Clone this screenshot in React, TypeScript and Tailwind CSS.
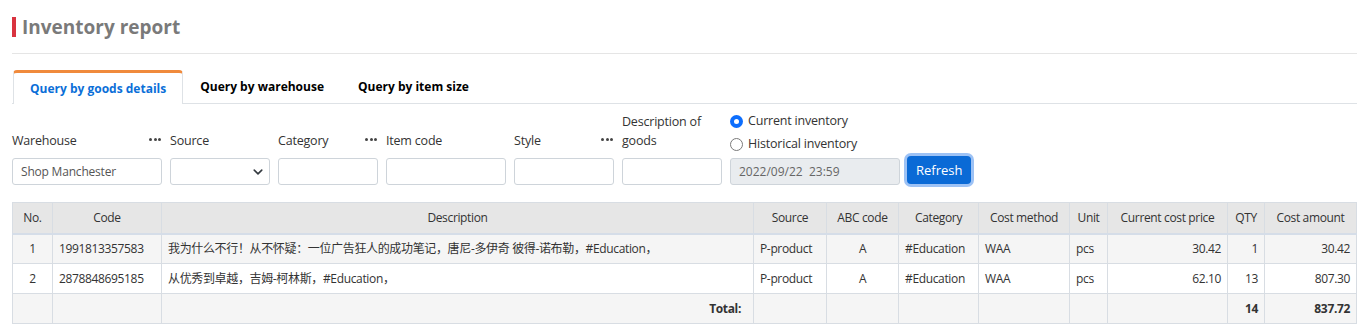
import React from 'react';

const font = { fontFamily: '"Open Sans", "Noto Sans CJK SC", sans-serif' };

const Dots = () => (
  <span className="flex gap-[1.5px] mb-[9px] mr-[1px]">
    <span className="w-[3px] h-[3px] rounded-full bg-[#444]" />
    <span className="w-[3px] h-[3px] rounded-full bg-[#444]" />
    <span className="w-[3px] h-[3px] rounded-full bg-[#444]" />
  </span>
);

interface FieldProps {
  label: React.ReactNode;
  width: string;
  dots?: boolean;
  children: React.ReactNode;
}

const Field: React.FC<FieldProps> = ({ label, width, dots, children }) => (
  <div className={`flex flex-col ${width}`}>
    <div className="flex justify-between items-end mb-[8px] text-[12.5px] tracking-[-0.2px] leading-[19px] text-[#333]">
      <span>{label}</span>
      {dots && <Dots />}
    </div>
    {children}
  </div>
);

const inputCls = 'h-[27px] w-full border border-[#ced4da] rounded-[3px] bg-white px-[8px] text-[12px] tracking-[-0.2px] text-[#555] outline-none';

const columns = [
  { name: 'No.', w: 'w-[40px]', align: 'text-center' },
  { name: 'Code', w: 'w-[109px]', align: 'text-left' },
  { name: 'Description', w: 'w-auto', align: 'text-left' },
  { name: 'Source', w: 'w-[73px]', align: 'text-left' },
  { name: 'ABC code', w: 'w-[72px]', align: 'text-center' },
  { name: 'Category', w: 'w-[80px]', align: 'text-left' },
  { name: 'Cost method', w: 'w-[91px]', align: 'text-left' },
  { name: 'Unit', w: 'w-[38px]', align: 'text-left' },
  { name: 'Current cost price', w: 'w-[120px]', align: 'text-right' },
  { name: 'QTY', w: 'w-[37px]', align: 'text-right' },
  { name: 'Cost amount', w: 'w-[92px]', align: 'text-right' },
];

const rows = [
  ['1', '1991813357583', '我为什么不行！从不怀疑：一位广告狂人的成功笔记，唐尼-多伊奇 彼得-诺布勒，#Education，', 'P-product', 'A', '#Education', 'WAA', 'pcs', '30.42', '1', '30.42'],
  ['2', '2878848695185', '从优秀到卓越，吉姆-柯林斯，#Education，', 'P-product', 'A', '#Education', 'WAA', 'pcs', '62.10', '13', '807.30'],
];

const cell = 'border border-[#d8dde3]';

export default function App() {
  return (
    <div className="bg-white pl-[12px] pr-[8px] pt-[15px] text-[#333]" style={font}>
      <div className="flex items-center h-[24px]">
        <span className="w-[4px] h-[20px] bg-[#d9333f] mr-[6px]" />
        <h1 className="text-[19px] font-bold text-[#7a7a7a] leading-[24px]">Inventory report</h1>
      </div>
      <div className="border-b border-[#e5e5e5] mt-[14px]" />

      <div className="flex mt-[16px] border-b border-[#dee2e6] pl-[1px]">
        <div className="-mb-[1px] h-[34px] px-[16px] border-x border-[#dee2e6] border-t-[3px] border-t-[#f08a3c] rounded-t-[4px] bg-white text-[12px] font-bold text-[#0b6fd8] leading-[29px] pt-[1px]">
          Query by goods details
        </div>
        <div className="h-[33px] px-[17px] text-[12px] font-bold text-black leading-[33px]">Query by warehouse</div>
        <div className="h-[33px] px-[17px] text-[12px] font-bold text-black leading-[33px]">Query by item size</div>
      </div>

      <div className="flex items-end gap-[8px] mt-[6px]">
        <Field label="Warehouse" width="w-[150px]" dots>
          <input className={inputCls} defaultValue="Shop Manchester" style={font} />
        </Field>
        <Field label="Source" width="w-[100px]">
          <div className={`${inputCls} flex items-center justify-end pr-[6px]`}>
            <svg width="10" height="10" viewBox="0 0 16 16" fill="none" stroke="#343a40" strokeWidth="2.5" strokeLinecap="round" strokeLinejoin="round">
              <path d="M2 5l6 6 6-6" />
            </svg>
          </div>
        </Field>
        <Field label="Category" width="w-[100px]" dots>
          <input className={inputCls} />
        </Field>
        <Field label="Item code" width="w-[120px]">
          <input className={inputCls} />
        </Field>
        <Field label="Style" width="w-[100px]" dots>
          <input className={inputCls} />
        </Field>
        <Field label={<>Description of<br />goods</>} width="w-[100px]">
          <input className={inputCls} />
        </Field>
        <div className="flex flex-col w-[170px]">
          <label className="flex items-center h-[23px] text-[12.5px] tracking-[-0.2px] text-[#333]">
            <span className="w-[13px] h-[13px] rounded-full bg-[#0d6efd] flex items-center justify-center mr-[5px]">
              <span className="w-[5px] h-[5px] rounded-full bg-white" />
            </span>
            Current inventory
          </label>
          <label className="flex items-center h-[23px] text-[12.5px] tracking-[-0.2px] text-[#333]">
            <span className="w-[13px] h-[13px] rounded-full border border-[#7a7a7a] bg-white mr-[5px]" />
            Historical inventory
          </label>
          <div className="mt-[2px] h-[27px] border border-[#ced4da] rounded-[3px] bg-[#e9ecef] px-[8px] text-[12px] text-[#666] leading-[25px] whitespace-pre">
            2022/09/22  23:59
          </div>
        </div>
        <button className="ml-[-1px] mb-[1px] h-[28px] px-[9px] pt-[1px] rounded-[4px] bg-[#0a6ad6] text-white text-[13px] ring-[3px] ring-[#9dc2f5]">
          Refresh
        </button>
      </div>

      <table className="mt-[17px] w-full table-fixed border-collapse text-[12px] tracking-[-0.35px] text-[#333]">
        <colgroup>
          {columns.map((c, i) => (
            <col key={i} className={c.w} />
          ))}
        </colgroup>
        <thead>
          <tr className="bg-[#e6e6e6] h-[31px]">
            {columns.map((c, i) => (
              <th key={i} className={`${cell} border-b-2 border-b-[#d5dde8] font-normal px-[4px] text-center`}>
                {c.name}
              </th>
            ))}
          </tr>
        </thead>
        <tbody>
          {rows.map((r, ri) => (
            <tr key={ri} className={`h-[30px] ${ri % 2 === 0 ? 'bg-[#f5f5f5]' : 'bg-white'}`}>
              {r.map((v, ci) => (
                <td key={ci} className={`${cell} px-[6px] whitespace-nowrap overflow-hidden ${columns[ci].align}`}>
                  {v}
                </td>
              ))}
            </tr>
          ))}
          <tr className="h-[30px] bg-[#f5f5f5] font-bold">
            <td className={cell} />
            <td className={cell} />
            <td className={`${cell} px-[12px] text-right`}>Total:</td>
            <td className={cell} />
            <td className={cell} />
            <td className={cell} />
            <td className={cell} />
            <td className={cell} />
            <td className={cell} />
            <td className={`${cell} px-[6px] text-right`}>14</td>
            <td className={`${cell} px-[6px] text-right`}>837.72</td>
          </tr>
        </tbody>
      </table>
    </div>
  );
}
